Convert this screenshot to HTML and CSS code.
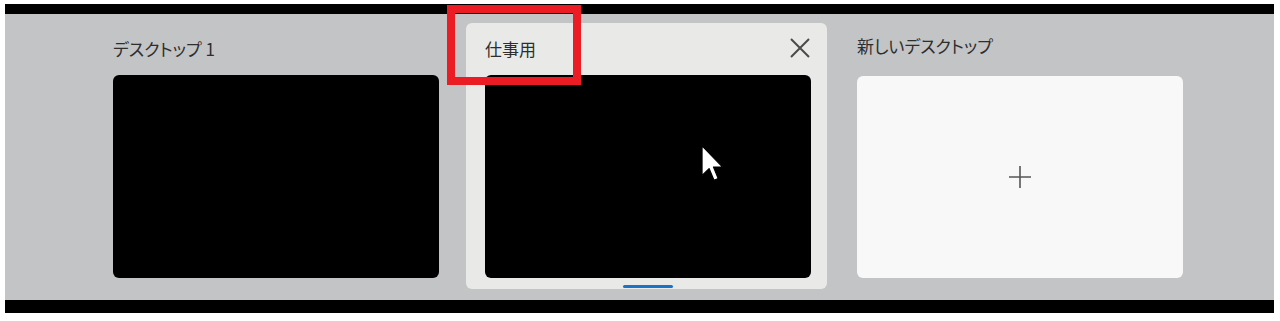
FILE: index.html
```html
<!DOCTYPE html>
<html lang="ja">
<head>
<meta charset="utf-8">
<title>タスクビュー</title>
<link rel="stylesheet" href="styles.css">
</head>
<body>
<div class="frame">
  <div class="desks">
    <div class="desk">
      <div class="label-row"><span class="label">デスクトップ 1</span></div>
      <div class="thumb"></div>
      <div class="foot"></div>
    </div>
    <div class="desk active">
      <div class="label-row">
        <span class="label">仕事用</span>
        <svg class="close" width="22" height="22" viewBox="0 0 22 22"><path d="M2 2 L20 20 M20 2 L2 20" stroke="#4a4a4a" stroke-width="2" fill="none"/></svg>
      </div>
      <div class="thumb">
        <svg class="cursor" width="23" height="38" viewBox="0 0 12 20"><path d="M0.5 0.5 L0.5 16 L4.2 12.4 L6.8 18.6 L9 17.6 L6.5 11.6 L11.3 11.6 Z" fill="#fff" stroke="#000" stroke-width="0.6" stroke-linejoin="round"/></svg>
      </div>
      <div class="foot"><span class="indicator"></span></div>
    </div>
    <div class="desk new">
      <div class="label-row"><span class="label">新しいデスクトップ</span></div>
      <div class="thumb add">
        <svg width="24" height="24" viewBox="0 0 24 24"><path d="M12 1 L12 23 M1 12 L23 12" stroke="#555" stroke-width="1.6" fill="none"/></svg>
      </div>
      <div class="foot"></div>
    </div>
  </div>
</div>
<div class="highlight"></div>
</body>
</html>
```
FILE: styles.css
```css
html, body {
  margin: 0;
  padding: 0;
  background: #ffffff;
}
body {
  padding-top: 4px;
  font-family: "Noto Sans CJK JP", "Noto Sans", sans-serif;
  font-feature-settings: "palt";
}
.frame {
  margin-left: 5px;
  width: 1269px;
  height: 286px;
  background: #c3c4c6;
  border-top: 10px solid #000;
  border-bottom: 13px solid #000;
}
.desks {
  display: flex;
  gap: 11px;
  padding: 9px 0 0 89px;
}
.desk {
  width: 361px;
  box-sizing: border-box;
  padding: 0 16px 0 19px;
  border-radius: 6px;
  display: flex;
  flex-direction: column;
}
.desk.active {
  background: #e9eae8;
}
.label-row {
  height: 52px;
  display: flex;
  justify-content: space-between;
  align-items: flex-start;
}
.label {
  margin-top: 14px;
  font-size: 17px;
  line-height: 24px;
  color: #2e2e2e;
}
.desk.new .label {
  margin-top: 11px;
}
.close {
  margin-top: 14px;
}
.thumb {
  height: 203px;
  background: #000;
  border-radius: 6px;
  position: relative;
}
.thumb.add {
  background: #f8f8f8;
  display: flex;
  align-items: center;
  justify-content: center;
  margin-top: 1px;
  height: 202px;
}
.cursor {
  position: absolute;
  left: 216px;
  top: 70px;
}
.foot {
  height: 11px;
  display: flex;
  justify-content: center;
}
.indicator {
  display: block;
  width: 50px;
  height: 3px;
  margin-top: 7px;
  border-radius: 2px;
  background: #1a73c8;
}
.highlight {
  position: absolute;
  left: 447px;
  top: 5px;
  width: 118px;
  height: 64px;
  border: 8px solid #ec1c24;
}
```
